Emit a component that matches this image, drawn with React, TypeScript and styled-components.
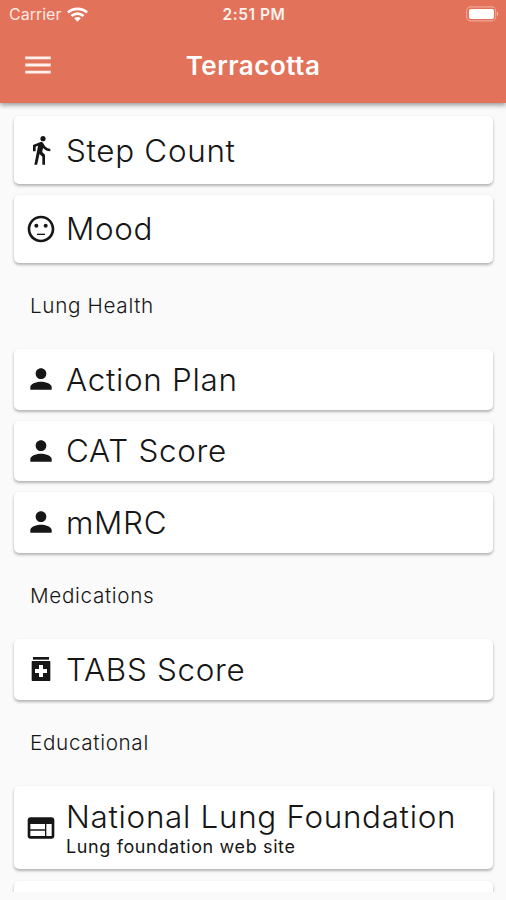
import React from "react";
import styled, { createGlobalStyle } from "styled-components";
import { MdDirectionsWalk, MdMenu, MdPerson, MdSentimentNeutral, MdWeb } from "react-icons/md";

const GlobalStyle = createGlobalStyle`
  * { box-sizing: border-box; }
  body { margin: 0; background: #fafafa; font-family: Inter, Roboto, sans-serif; color: #161616; }
`;

const Screen = styled.div`
  display: flex;
  flex-direction: column;
  width: 506px;
  height: 900px;
  overflow: hidden;
  background: #fafafa;
`;

const Header = styled.header`
  position: relative;
  flex: none;
  height: 103px;
  background: #e27259;
  color: #fff;
  box-shadow: 0 2px 5px rgba(0, 0, 0, 0.42);
`;

const StatusBar = styled.div`
  display: grid;
  grid-template-columns: 1fr auto 1fr;
  align-items: center;
  height: 28px;
  padding: 0 7px 0 9px;
`;

const Carrier = styled.div`
  display: flex;
  align-items: center;
  gap: 6px;
  font-size: 16px;
  letter-spacing: 0;
  color: #ffe9e3;
`;

const Clock = styled.div`
  font-size: 15.5px;
  font-weight: 600;
  letter-spacing: 0.55px;
  color: #fff1ed;
`;

const Battery = styled.svg`
  justify-self: end;
  display: block;
`;

const AppBar = styled.div`
  display: grid;
  grid-template-columns: 76px 1fr 76px;
  align-items: center;
  height: 75px;
`;

const MenuButton = styled.button`
  display: flex;
  width: 76px;
  justify-content: center;
  padding: 0 0 1px;
  border: 0;
  background: none;
  color: #fff1ed;
`;

const Title = styled.h1`
  margin: 0;
  text-align: center;
  font-size: 26px;
  line-height: 32px;
  font-weight: 600;
  letter-spacing: 0.5px;
`;

const List = styled.main`
  display: flex;
  flex-direction: column;
  flex: none;
  height: 789px;
  overflow: hidden;
  padding: 13px 13px 0 14px;
`;

const Group = styled.section<{ $gap: number }>`
  display: flex;
  flex-direction: column;
  flex: none;
  gap: ${(p) => p.$gap}px;
`;

const Card = styled.article<{ $height: number }>`
  display: flex;
  align-items: center;
  flex: none;
  gap: 9px;
  height: ${(p) => p.$height}px;
  padding: 0 11px;
  border-radius: 5px;
  background: #fff;
  box-shadow: 0 2px 3px rgba(0, 0, 0, 0.28), 0 0 3px rgba(0, 0, 0, 0.04);
  svg { flex: none; }
`;

const Label = styled.div<{ $inset: number }>`
  padding-top: ${(p) => p.$inset}px;
  font-size: 31.4px;
  line-height: 38px;
  font-weight: 300;
  letter-spacing: 0.7px;
  white-space: nowrap;
`;

const Caption = styled.div`
  font-size: 18px;
  line-height: 21px;
  letter-spacing: 0.62px;
  white-space: nowrap;
`;

const CaptionedText = styled.div`
  padding-bottom: 1px;
`;

const SectionTitle = styled.h2`
  flex: none;
  height: 86.5px;
  margin: 0;
  padding-left: 16px;
  font-size: 20.7px;
  line-height: 86px;
  font-weight: 300;
  letter-spacing: 0.65px;
`;

const WifiIcon = () => (
  <svg width="21" height="15" viewBox="0 0 21 15">
    <g fill="none" stroke="#fff" strokeWidth="2.7">
      <path d="M1 5.5C6.2.6 14.800.6 20 5.500" />
      <path d="M4.500 9C8 5.700 13 5.700 16.500 9" />
    </g>
    <path d="M7.200 11.300c1.900-1.700 4.700-1.700 6.600 0L10.500 14.700z" fill="#fff" />
  </svg>
);

const BatteryIcon = () => (
  <Battery width="33" height="16" viewBox="0 0 33 16">
    <rect x="0.700" y="0.900" width="29" height="14" rx="4" fill="none" stroke="#f0a897" strokeWidth="1.100" />
    <rect x="3" y="3" width="25" height="10" rx="2" fill="#fff" />
    <path d="M31 5.800c1.500.6 1.500 3.600 0 4.200z" fill="#f5bdaf" />
  </Battery>
);

const MedicineIcon = () => (
  <svg width="32" height="32" viewBox="0 0 24 24" fill="currentColor">
    <path d="M6 3h12v2H6z" />
    <path fillRule="evenodd" d="M5.500 6h13q.5 0 .5.500v14q0 .5-.5.500h-13q-.5 0-.5-.500v-14q0-.5.500-.500zm5 3v3h-3v3h3v3h3v-3h3v-3h-3V9z" />
  </svg>
);

interface EntryProps {
  icon: React.ReactNode;
  label: string;
  height?: number;
  caption?: string;
}

const Entry = ({ icon, label, height = 60.5, caption }: EntryProps) => (
  <Card $height={height}>
    {icon}
    {caption ? (
      <CaptionedText>
        <Label $inset={0}>{label}</Label>
        <Caption>{caption}</Caption>
      </CaptionedText>
    ) : (
      <Label $inset={height > 61 ? 1 : 0.5}>{label}</Label>
    )}
  </Card>
);

export default function App() {
  return (
    <Screen>
      <GlobalStyle />
      <Header>
        <StatusBar>
          <Carrier>Carrier <WifiIcon /></Carrier>
          <Clock>2:51 PM</Clock>
          <BatteryIcon />
        </StatusBar>
        <AppBar>
          <MenuButton aria-label="Menu"><MdMenu size={34} /></MenuButton>
          <Title>Terracotta</Title>
        </AppBar>
      </Header>
      <List>
        <Group $gap={10.5}>
          <Entry icon={<MdDirectionsWalk size={32} />} label="Step Count" height={68} />
          <Entry icon={<MdSentimentNeutral size={32} />} label="Mood" height={68} />
        </Group>
        <SectionTitle>Lung Health</SectionTitle>
        <Group $gap={11}>
          <Entry icon={<MdPerson size={32} />} label="Action Plan" />
          <Entry icon={<MdPerson size={32} />} label="CAT Score" />
          <Entry icon={<MdPerson size={32} />} label="mMRC" />
        </Group>
        <SectionTitle>Medications</SectionTitle>
        <Entry icon={<MedicineIcon />} label="TABS Score" />
        <SectionTitle>Educational</SectionTitle>
        <Group $gap={11.5}>
          <Entry icon={<MdWeb size={32} />} label="National Lung Foundation" caption="Lung foundation web site" height={83} />
          <Card $height={60.5} />
        </Group>
      </List>
    </Screen>
  );
}
